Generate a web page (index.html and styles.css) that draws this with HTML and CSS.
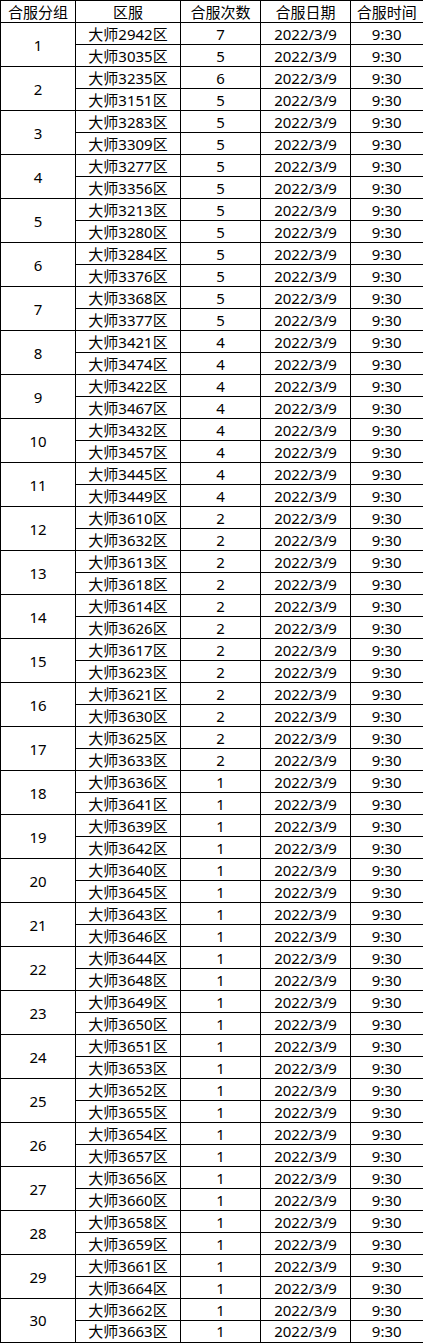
FILE: index.html
```html
<!DOCTYPE html>
<html lang="zh-CN">
<head>
<meta charset="utf-8">
<title>合服表</title>
<link rel="stylesheet" href="styles.css">
</head>
<body>
<table class="merge">
<colgroup>
<col class="c1"><col class="c2"><col class="c3"><col class="c4"><col class="c5">
</colgroup>
<thead>
<tr><th>合服分组</th><th>区服</th><th>合服次数</th><th>合服日期</th><th>合服时间</th></tr>
</thead>
<tbody>
<tr><td rowspan="2">1</td><td>大师2942区</td><td>7</td><td>2022/3/9</td><td>9:30</td></tr>
<tr><td>大师3035区</td><td>5</td><td>2022/3/9</td><td>9:30</td></tr>
<tr><td rowspan="2">2</td><td>大师3235区</td><td>6</td><td>2022/3/9</td><td>9:30</td></tr>
<tr><td>大师3151区</td><td>5</td><td>2022/3/9</td><td>9:30</td></tr>
<tr><td rowspan="2">3</td><td>大师3283区</td><td>5</td><td>2022/3/9</td><td>9:30</td></tr>
<tr><td>大师3309区</td><td>5</td><td>2022/3/9</td><td>9:30</td></tr>
<tr><td rowspan="2">4</td><td>大师3277区</td><td>5</td><td>2022/3/9</td><td>9:30</td></tr>
<tr><td>大师3356区</td><td>5</td><td>2022/3/9</td><td>9:30</td></tr>
<tr><td rowspan="2">5</td><td>大师3213区</td><td>5</td><td>2022/3/9</td><td>9:30</td></tr>
<tr><td>大师3280区</td><td>5</td><td>2022/3/9</td><td>9:30</td></tr>
<tr><td rowspan="2">6</td><td>大师3284区</td><td>5</td><td>2022/3/9</td><td>9:30</td></tr>
<tr><td>大师3376区</td><td>5</td><td>2022/3/9</td><td>9:30</td></tr>
<tr><td rowspan="2">7</td><td>大师3368区</td><td>5</td><td>2022/3/9</td><td>9:30</td></tr>
<tr><td>大师3377区</td><td>5</td><td>2022/3/9</td><td>9:30</td></tr>
<tr><td rowspan="2">8</td><td>大师3421区</td><td>4</td><td>2022/3/9</td><td>9:30</td></tr>
<tr><td>大师3474区</td><td>4</td><td>2022/3/9</td><td>9:30</td></tr>
<tr><td rowspan="2">9</td><td>大师3422区</td><td>4</td><td>2022/3/9</td><td>9:30</td></tr>
<tr><td>大师3467区</td><td>4</td><td>2022/3/9</td><td>9:30</td></tr>
<tr><td rowspan="2">10</td><td>大师3432区</td><td>4</td><td>2022/3/9</td><td>9:30</td></tr>
<tr><td>大师3457区</td><td>4</td><td>2022/3/9</td><td>9:30</td></tr>
<tr><td rowspan="2">11</td><td>大师3445区</td><td>4</td><td>2022/3/9</td><td>9:30</td></tr>
<tr><td>大师3449区</td><td>4</td><td>2022/3/9</td><td>9:30</td></tr>
<tr><td rowspan="2">12</td><td>大师3610区</td><td>2</td><td>2022/3/9</td><td>9:30</td></tr>
<tr><td>大师3632区</td><td>2</td><td>2022/3/9</td><td>9:30</td></tr>
<tr><td rowspan="2">13</td><td>大师3613区</td><td>2</td><td>2022/3/9</td><td>9:30</td></tr>
<tr><td>大师3618区</td><td>2</td><td>2022/3/9</td><td>9:30</td></tr>
<tr><td rowspan="2">14</td><td>大师3614区</td><td>2</td><td>2022/3/9</td><td>9:30</td></tr>
<tr><td>大师3626区</td><td>2</td><td>2022/3/9</td><td>9:30</td></tr>
<tr><td rowspan="2">15</td><td>大师3617区</td><td>2</td><td>2022/3/9</td><td>9:30</td></tr>
<tr><td>大师3623区</td><td>2</td><td>2022/3/9</td><td>9:30</td></tr>
<tr><td rowspan="2">16</td><td>大师3621区</td><td>2</td><td>2022/3/9</td><td>9:30</td></tr>
<tr><td>大师3630区</td><td>2</td><td>2022/3/9</td><td>9:30</td></tr>
<tr><td rowspan="2">17</td><td>大师3625区</td><td>2</td><td>2022/3/9</td><td>9:30</td></tr>
<tr><td>大师3633区</td><td>2</td><td>2022/3/9</td><td>9:30</td></tr>
<tr><td rowspan="2">18</td><td>大师3636区</td><td>1</td><td>2022/3/9</td><td>9:30</td></tr>
<tr><td>大师3641区</td><td>1</td><td>2022/3/9</td><td>9:30</td></tr>
<tr><td rowspan="2">19</td><td>大师3639区</td><td>1</td><td>2022/3/9</td><td>9:30</td></tr>
<tr><td>大师3642区</td><td>1</td><td>2022/3/9</td><td>9:30</td></tr>
<tr><td rowspan="2">20</td><td>大师3640区</td><td>1</td><td>2022/3/9</td><td>9:30</td></tr>
<tr><td>大师3645区</td><td>1</td><td>2022/3/9</td><td>9:30</td></tr>
<tr><td rowspan="2">21</td><td>大师3643区</td><td>1</td><td>2022/3/9</td><td>9:30</td></tr>
<tr><td>大师3646区</td><td>1</td><td>2022/3/9</td><td>9:30</td></tr>
<tr><td rowspan="2">22</td><td>大师3644区</td><td>1</td><td>2022/3/9</td><td>9:30</td></tr>
<tr><td>大师3648区</td><td>1</td><td>2022/3/9</td><td>9:30</td></tr>
<tr><td rowspan="2">23</td><td>大师3649区</td><td>1</td><td>2022/3/9</td><td>9:30</td></tr>
<tr><td>大师3650区</td><td>1</td><td>2022/3/9</td><td>9:30</td></tr>
<tr><td rowspan="2">24</td><td>大师3651区</td><td>1</td><td>2022/3/9</td><td>9:30</td></tr>
<tr><td>大师3653区</td><td>1</td><td>2022/3/9</td><td>9:30</td></tr>
<tr><td rowspan="2">25</td><td>大师3652区</td><td>1</td><td>2022/3/9</td><td>9:30</td></tr>
<tr><td>大师3655区</td><td>1</td><td>2022/3/9</td><td>9:30</td></tr>
<tr><td rowspan="2">26</td><td>大师3654区</td><td>1</td><td>2022/3/9</td><td>9:30</td></tr>
<tr><td>大师3657区</td><td>1</td><td>2022/3/9</td><td>9:30</td></tr>
<tr><td rowspan="2">27</td><td>大师3656区</td><td>1</td><td>2022/3/9</td><td>9:30</td></tr>
<tr><td>大师3660区</td><td>1</td><td>2022/3/9</td><td>9:30</td></tr>
<tr><td rowspan="2">28</td><td>大师3658区</td><td>1</td><td>2022/3/9</td><td>9:30</td></tr>
<tr><td>大师3659区</td><td>1</td><td>2022/3/9</td><td>9:30</td></tr>
<tr><td rowspan="2">29</td><td>大师3661区</td><td>1</td><td>2022/3/9</td><td>9:30</td></tr>
<tr><td>大师3664区</td><td>1</td><td>2022/3/9</td><td>9:30</td></tr>
<tr><td rowspan="2">30</td><td>大师3662区</td><td>1</td><td>2022/3/9</td><td>9:30</td></tr>
<tr><td>大师3663区</td><td>1</td><td>2022/3/9</td><td>9:30</td></tr>
</tbody>
</table>
</body>
</html>
```
FILE: styles.css
```css
html, body {
  margin: 0;
  padding: 0;
  background: #ffffff;
}
.merge {
  border-collapse: collapse;
  table-layout: fixed;
  width: 423px;
  font-family: "Noto Sans", "Noto Sans CJK SC", sans-serif;
  font-size: 15px;
  color: #000000;
}
.c1 { width: 75px; }
.c2 { width: 105px; }
.c3 { width: 80px; }
.c4 { width: 90px; }
.c5 { width: 73px; }
.merge tr {
  height: 22px;
}
.merge th,
.merge td {
  border: 1px solid #000000;
  padding: 0;
  text-align: center;
  vertical-align: middle;
  font-weight: normal;
  line-height: 20px;
  white-space: nowrap;
}
.merge tr > :last-child {
  border-right-width: 2px;
}
.merge tbody tr:last-child td,
.merge tbody tr:nth-last-child(2) td[rowspan] {
  border-bottom-width: 2px;
}
```
